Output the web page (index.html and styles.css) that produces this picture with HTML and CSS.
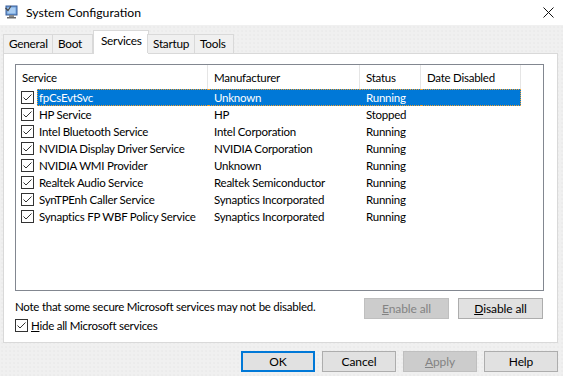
FILE: index.html
```html
<!DOCTYPE html>
<html>
<head>
<meta charset="utf-8">
<link rel="stylesheet" href="styles.css">
</head>
<body>
<div class="window">
  <div class="titlebar">
    <svg class="appicon" width="14" height="14" viewBox="0 0 14 14">
      <rect x="1" y="1" width="11" height="9" fill="#6f9fd8" stroke="#3b5f9a" stroke-width="1"/>
      <rect x="2.5" y="2.5" width="8" height="6" fill="#a9cdf3"/>
      <rect x="4" y="10" width="5" height="2" fill="#8a8a8a"/>
      <rect x="2" y="12" width="9" height="1.5" fill="#6a6a6a"/>
      <path d="M0.5 3 L3 5.5 L6 1" fill="none" stroke="#4a4a4a" stroke-width="1.2"/>
    </svg>
    <span class="title">System Configuration</span>
    <svg class="close" width="11" height="11" viewBox="0 0 11 11">
      <path d="M0.5 0.5 L10.5 10.5 M10.5 0.5 L0.5 10.5" stroke="#111" stroke-width="1"/>
    </svg>
  </div>
  <div class="body">
    <div class="tabs">
      <div class="tab t-general">General</div>
      <div class="tab t-boot">Boot</div>
      <div class="tab selected t-services">Services</div>
      <div class="tab t-startup">Startup</div>
      <div class="tab t-tools">Tools</div>
    </div>
    <div class="panel">
      <div class="listbox">
        <div class="row header">
          <div class="c c1">Service</div>
          <div class="c c2">Manufacturer</div>
          <div class="c c3">Status</div>
          <div class="c c4">Date Disabled</div>
        </div>
        <div class="row item sel">
          <div class="c c1"><span class="cb"><svg viewBox="0 0 11 11"><path d="M1.5 5.5 L4 8 L9.5 2.5" fill="none" stroke="#333" stroke-width="1"/></svg></span><span class="name">fpCsEvtSvc</span></div>
          <div class="c c2">Unknown</div>
          <div class="c c3">Running</div>
          <div class="c c4"></div>
        </div>
        <div class="row item">
          <div class="c c1"><span class="cb"><svg viewBox="0 0 11 11"><path d="M1.5 5.5 L4 8 L9.5 2.5" fill="none" stroke="#333" stroke-width="1"/></svg></span><span class="name">HP Service</span></div>
          <div class="c c2">HP</div>
          <div class="c c3">Stopped</div>
          <div class="c c4"></div>
        </div>
        <div class="row item">
          <div class="c c1"><span class="cb"><svg viewBox="0 0 11 11"><path d="M1.5 5.5 L4 8 L9.5 2.5" fill="none" stroke="#333" stroke-width="1"/></svg></span><span class="name">Intel Bluetooth Service</span></div>
          <div class="c c2">Intel Corporation</div>
          <div class="c c3">Running</div>
          <div class="c c4"></div>
        </div>
        <div class="row item">
          <div class="c c1"><span class="cb"><svg viewBox="0 0 11 11"><path d="M1.5 5.5 L4 8 L9.5 2.5" fill="none" stroke="#333" stroke-width="1"/></svg></span><span class="name">NVIDIA Display Driver Service</span></div>
          <div class="c c2">NVIDIA Corporation</div>
          <div class="c c3">Running</div>
          <div class="c c4"></div>
        </div>
        <div class="row item">
          <div class="c c1"><span class="cb"><svg viewBox="0 0 11 11"><path d="M1.5 5.5 L4 8 L9.5 2.5" fill="none" stroke="#333" stroke-width="1"/></svg></span><span class="name">NVIDIA WMI Provider</span></div>
          <div class="c c2">Unknown</div>
          <div class="c c3">Running</div>
          <div class="c c4"></div>
        </div>
        <div class="row item">
          <div class="c c1"><span class="cb"><svg viewBox="0 0 11 11"><path d="M1.5 5.5 L4 8 L9.5 2.5" fill="none" stroke="#333" stroke-width="1"/></svg></span><span class="name">Realtek Audio Service</span></div>
          <div class="c c2">Realtek Semiconductor</div>
          <div class="c c3">Running</div>
          <div class="c c4"></div>
        </div>
        <div class="row item">
          <div class="c c1"><span class="cb"><svg viewBox="0 0 11 11"><path d="M1.5 5.5 L4 8 L9.5 2.5" fill="none" stroke="#333" stroke-width="1"/></svg></span><span class="name">SynTPEnh Caller Service</span></div>
          <div class="c c2">Synaptics Incorporated</div>
          <div class="c c3">Running</div>
          <div class="c c4"></div>
        </div>
        <div class="row item">
          <div class="c c1"><span class="cb"><svg viewBox="0 0 11 11"><path d="M1.5 5.5 L4 8 L9.5 2.5" fill="none" stroke="#333" stroke-width="1"/></svg></span><span class="name">Synaptics FP WBF Policy Service</span></div>
          <div class="c c2">Synaptics Incorporated</div>
          <div class="c c3">Running</div>
          <div class="c c4"></div>
        </div>
      </div>
      <div class="noterow">
        <div class="note">Note that some secure Microsoft services may not be disabled.</div>
        <div class="btn disabled wide"><u>E</u>nable all</div>
        <div class="btn wide"><u>D</u>isable all</div>
      </div>
      <div class="hiderow">
        <span class="cb"><svg viewBox="0 0 11 11"><path d="M1.5 5.5 L4 8 L9.5 2.5" fill="none" stroke="#333" stroke-width="1"/></svg></span>
        <span class="hidetext"><u>H</u>ide all Microsoft services</span>
      </div>
    </div>
    <div class="footer">
      <div class="btn default">OK</div>
      <div class="btn">Cancel</div>
      <div class="btn disabled"><u>A</u>pply</div>
      <div class="btn">Help</div>
    </div>
  </div>
</div>
</body>
</html>
```

FILE: styles.css
```css
* { box-sizing: border-box; }
html, body {
  margin: 0;
  padding: 0;
  width: 563px;
  height: 376px;
  overflow: hidden;
  background: #f0f0f0;
  font-family: "Lato", "Segoe UI", sans-serif;
  font-size: 11.5px;
  letter-spacing: -0.25px;
  color: #000;
}
.window { width: 563px; height: 376px; display: flex; flex-direction: column; }
.titlebar {
  height: 25px;
  background: #fff;
  display: flex;
  align-items: center;
  padding-left: 5px;
  padding-right: 8px;
}
.appicon { flex: none; margin-top: -1px; }
.title { margin-left: 7px; font-size: 12.2px; letter-spacing: 0; flex: 1; }
.close { flex: none; margin-right: 1px; }

.body {
  flex: 1;
  background-color: #f0f0f0;
  background-image: radial-gradient(circle, #e6e6e6 0.6px, transparent 0.8px);
  background-size: 4px 4px;
  padding: 5px 5px 0 3px;
  display: flex;
  flex-direction: column;
}
.tabs { display: flex; align-items: flex-end; height: 23px; position: relative; z-index: 1; }
.tab {
  height: 19px;
  border: 1px solid #d9d9d9;
  border-bottom: none;
  background: #f0f0f0;
  padding: 0 0 0 5px;
  line-height: 18px;
  margin-left: -1px;
  white-space: nowrap;
  font-size: 11.8px;
  letter-spacing: -0.25px;
}
.t-general { margin-left: 0; width: 50px; }
.t-boot { width: 41px; }
.t-services { width: 56px; }
.t-startup { width: 48px; }
.t-tools { width: 40px; }
.tab.selected {
  background: #fff;
  margin-left: 0;
  margin-right: -1px;
  line-height: 20px;
  padding-left: 7px;
  height: 24px;
  margin-bottom: -1px;
}
.panel {
  background: #fff;
  border: 1px solid #d9d9d9;
  height: 290px;
  padding: 10px 14px 0 11px;
  display: flex;
  flex-direction: column;
}
.listbox {
  border: 1px solid #828790;
  height: 227px;
  width: 529px;
  background: #fff;
  flex: none;
}
.row { display: flex; height: 17px; align-items: center; }
.row.header { height: 24px; align-items: stretch; }
.row.header .c { padding-left: 6px; line-height: 25px; border-right: 1px solid #e5e5e5; }
.c { flex: none; white-space: nowrap; overflow: hidden; }
.c1 { width: 192px; }
.c2 { width: 152px; padding-left: 6px; }
.c3 { width: 61px; padding-left: 6px; }
.c4 { width: 100px; padding-left: 6px; }
.row.item .c1 { display: flex; align-items: center; padding-left: 5px; }
.row.item .c { line-height: 17px; }
.cb {
  width: 13px; height: 13px;
  border: 1px solid #333;
  background: #fff;
  display: inline-flex;
  flex: none;
}
.cb svg { width: 11px; height: 11px; }
.name { margin-left: 4px; padding: 0 1px; line-height: 15px; }
.row.sel .c2, .row.sel .c3, .row.sel .c4 { background: #0078d7; color: #fff; }
.row.sel .name { background: #0078d7; color: #fff; flex: 1; margin-left: 3px; padding-left: 1px; }
.row.sel .c2, .row.sel .c3, .row.sel .c4 { border-top: 1px dotted #f0a030; border-bottom: 1px dotted #f0a030; height: 17px; line-height: 15px; }
.row.sel .c4 { border-right: 1px dotted #f0a030; }
.row.sel .name { border-top: 1px dotted #f0a030; border-bottom: 1px dotted #f0a030; border-left: 1px dotted #f0a030; height: 17px; }

.noterow { display: flex; align-items: center; margin-top: 7px; height: 21px; flex: none; }
.note { flex: 1; white-space: nowrap; margin-top: -4px; }
.btn {
  width: 74px;
  height: 21px;
  border: 1px solid #adadad;
  background: #e1e1e1;
  display: flex;
  align-items: center;
  justify-content: center;
  flex: none;
  white-space: nowrap;
  font-size: 12px;
  letter-spacing: -0.1px;
}
.btn.wide { width: 85px; margin-left: 9px; }
.btn.disabled {
  background: #cccccc;
  border-color: #bfbfbf;
  color: #838383;
}
.btn.default { border: 2px solid #0078d7; }
.hiderow { display: flex; align-items: center; margin-top: 0; height: 13px; flex: none; }
.hidetext { margin-left: 3px; white-space: nowrap; }
.footer { display: flex; justify-content: flex-end; gap: 7px; margin-top: 8px; }
```
